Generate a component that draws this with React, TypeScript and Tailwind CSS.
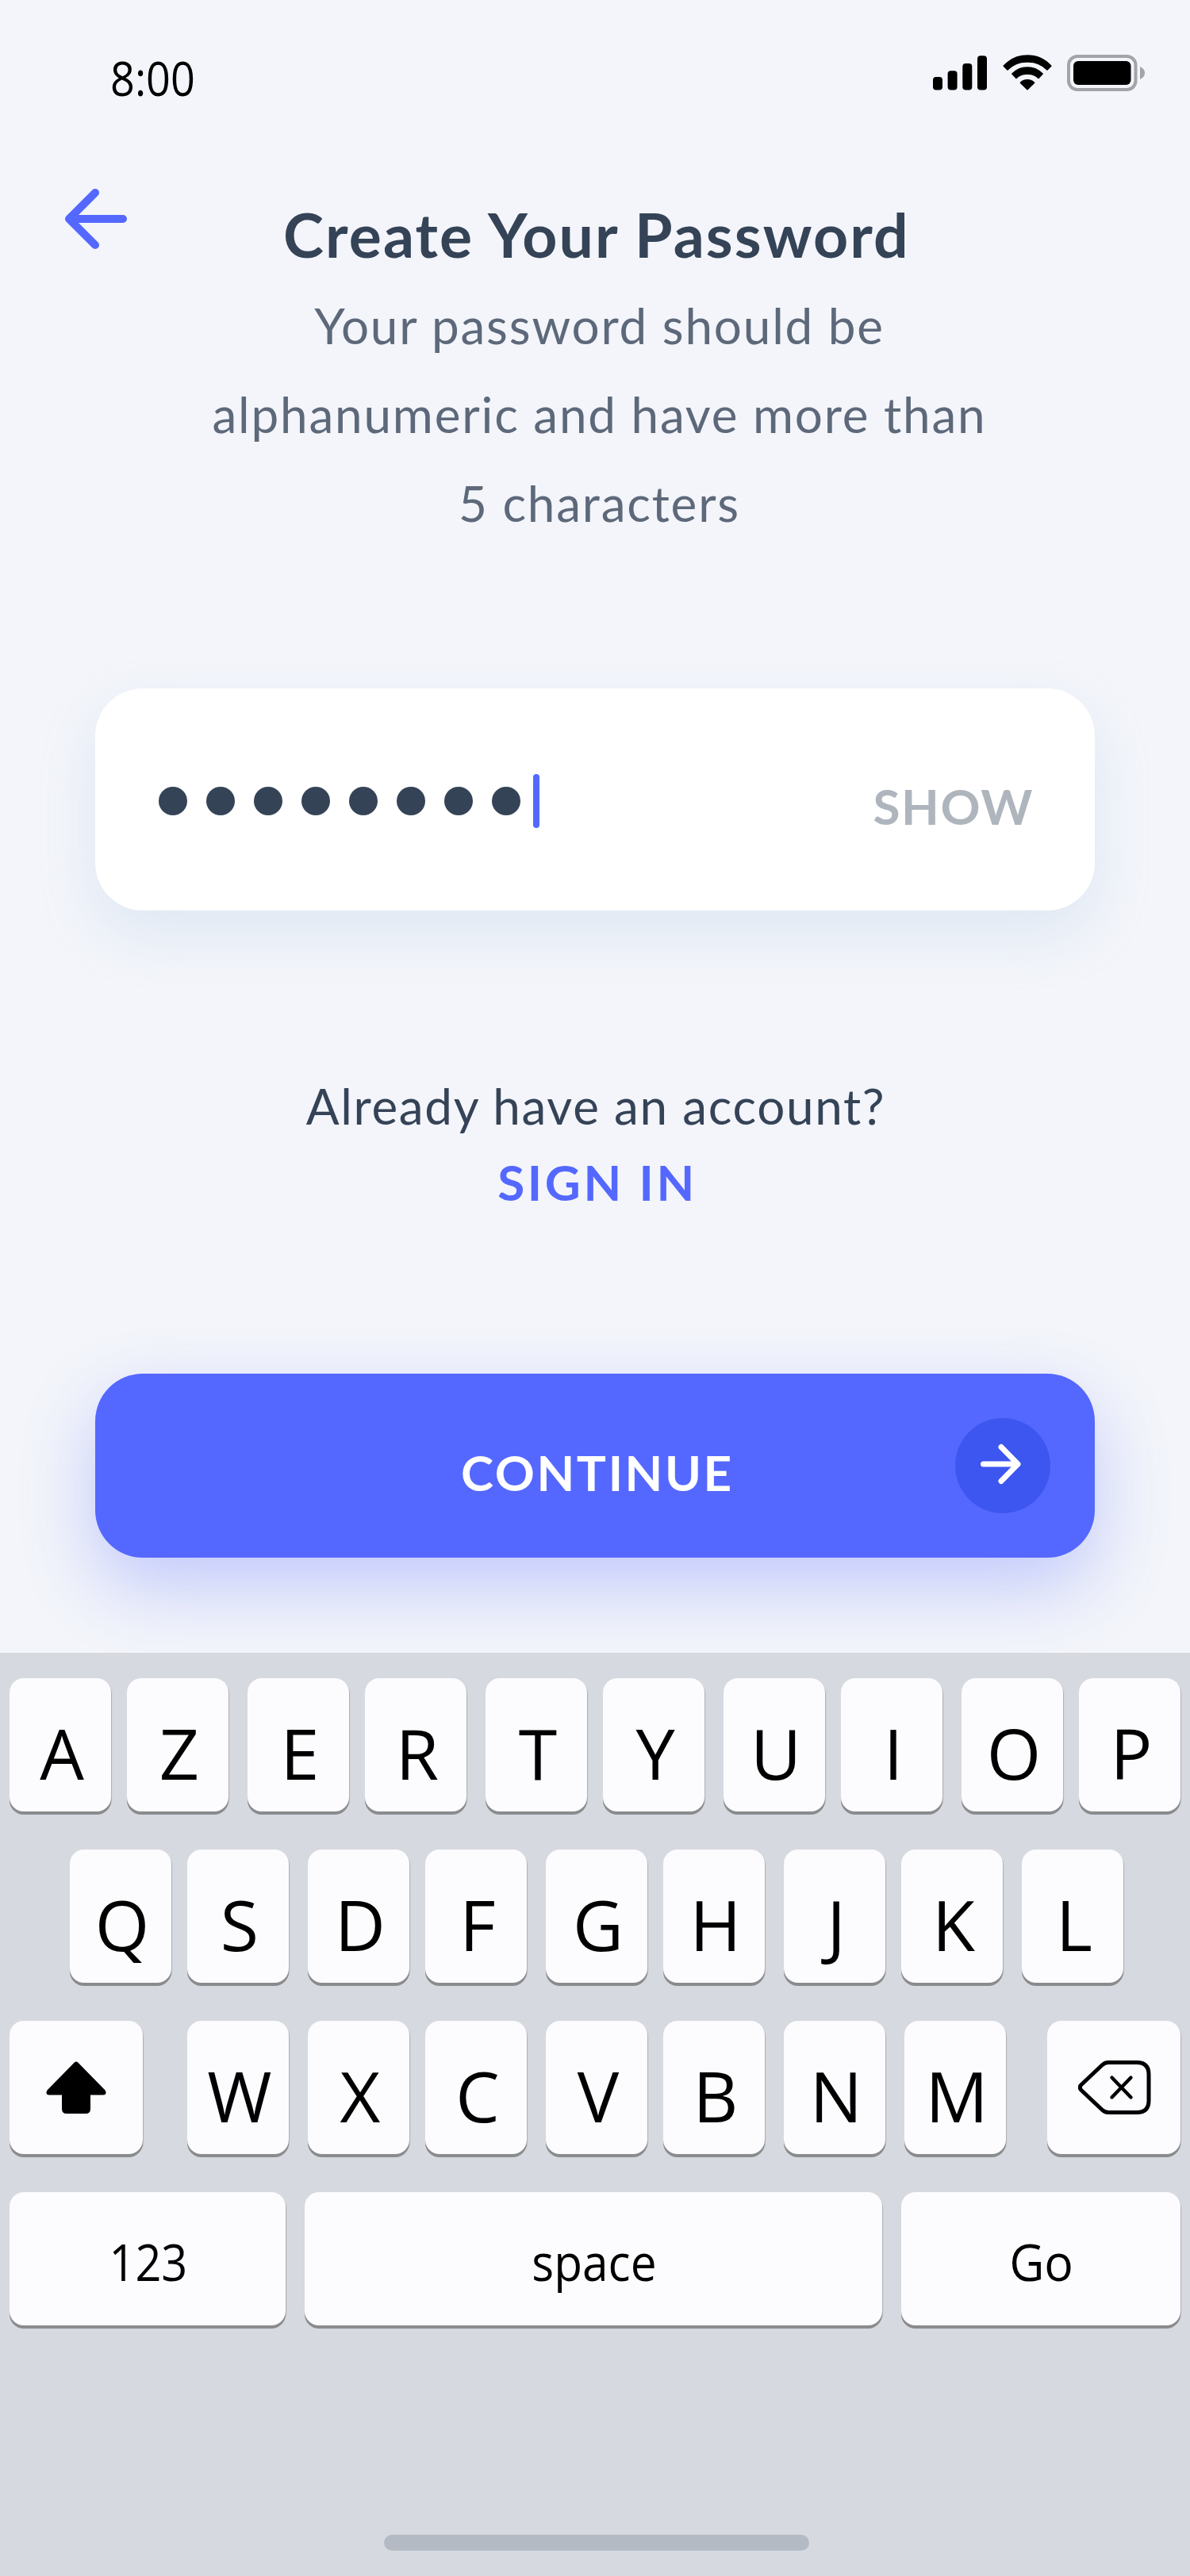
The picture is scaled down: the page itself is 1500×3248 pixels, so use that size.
import type { ReactNode } from "react";

function SignalBars() {
  return (
    <svg className="h-[46px] w-[70px]" viewBox="0 0 70 46" aria-hidden="true">
      <rect x="1" y="28" width="12" height="16.5" rx="4" />
      <rect x="19.6" y="20.2" width="12" height="24.3" rx="4" />
      <rect x="38.3" y="11" width="12" height="33.5" rx="4" />
      <rect x="57" y="1.3" width="12" height="43.2" rx="4" />
    </svg>
  );
}

function WifiIcon() {
  return (
    <svg className="h-[46px] w-[64px]" viewBox="0 0 192 138" aria-hidden="true">
      <g stroke="#000" strokeWidth="5" strokeLinejoin="round">
        <path d="M96 3.500A121 121 0 0 1 185 42.500L171 56.500A101 101 0 0 0 96 26.500A101 101 0 0 0 21 56.500L7 42.500A121 121 0 0 1 96 3.500Z" />
        <path d="M96 48A78 78 0 0 1 153 72.500L138 88A56 56 0 0 0 96 72.500A56 56 0 0 0 54 88L39 72.500A78 78 0 0 1 96 48Z" />
        <path d="M96 95.500A34 34 0 0 1 121.500 106L96 131L70.500 106A34 34 0 0 1 96 95.500Z" />
      </g>
    </svg>
  );
}

function BatteryIcon() {
  return (
    <svg className="h-[46px] w-[98px]" viewBox="0 0 98 46" aria-hidden="true">
      <rect x="2" y="2" width="84.500" height="42" rx="11" fill="none" stroke="#a2a4a7" strokeWidth="4" />
      <rect x="8" y="8" width="72.500" height="30" rx="6" />
      <path d="M92 15C95.500 16.500 98 19.500 98 23S95.500 29.500 92 31Z" fill="#a2a4a7" />
    </svg>
  );
}

function StatusBar() {
  return (
    <div className="flex h-[200px] items-start justify-between pr-[57px] pl-[139px] text-black">
      <span className="mt-[63px] origin-left scale-x-90 font-['Open_Sans',sans-serif] text-[60px] leading-[70px]">8:00</span>
      <div className="mt-[69px] flex items-center">
        <SignalBars />
        <div className="w-[18px]" />
        <WifiIcon />
        <div className="w-[18px]" />
        <BatteryIcon />
      </div>
    </div>
  );
}

function Header() {
  return (
    <header className="grid grid-cols-[160px_1fr_160px] pt-9">
      <button type="button" aria-label="Back" className="h-20 w-20 justify-self-end">
        <svg className="h-20 w-20" viewBox="0 0 80 80" fill="none" stroke="#5468ff" strokeWidth="10" strokeLinecap="round" strokeLinejoin="round">
          <path d="M75 40H7M40 7L7 40L40 73" />
        </svg>
      </button>
      <div className="text-center">
        <h1 className="pt-0.5 pl-1 text-[77px] leading-[115px] font-bold tracking-[2.1px] text-[#354357]">Create Your Password</h1>
        <p className="pt-px pl-[11px] text-[62px] leading-[112px] tracking-[1.8px] text-[#5d697a]">
          Your password should be
          <br />
          alphanumeric and have more than
          <br />5 characters
        </p>
      </div>
    </header>
  );
}

function PasswordField() {
  return (
    <div className="mx-[120px] mt-[178px] flex h-[280px] items-center rounded-[60px] bg-white pr-[77px] pl-20 shadow-[0_30px_72px_rgba(143,180,220,0.2)]">
      <div className="flex items-center pt-1">
        <div className="flex gap-6">
          {Array.from({ length: 8 }, (_, i) => (
            <span key={i} className="h-9 w-9 rounded-full bg-[#354357]" />
          ))}
        </div>
        <span className="ml-4 h-[68px] w-2 rounded-full bg-[#5468ff]" />
      </div>
      <button type="button" className="ml-auto pt-4 text-[62px] leading-none font-bold tracking-[1.6px] text-[#aeb5bd]">
        SHOW
      </button>
    </div>
  );
}

function Key({ width, icon = false, small = false, children }: { width: string; icon?: boolean; small?: boolean; children: ReactNode }) {
  const text = icon ? "" : small ? "pt-2 pl-0.5 text-[64px]" : "pt-5 pl-1 text-[88px]";
  return (
    <button
      type="button"
      className={`flex h-[168px] shrink-0 items-center justify-center rounded-[18px] bg-[#fcfcfe] leading-none shadow-[0_4px_0_#8a8b8d,1px_2px_1px_rgba(0,0,0,0.2)] ${width} ${text}`}
    >
      {children}
    </button>
  );
}

function LetterPairs({ letters }: { letters: string }) {
  const pairs = letters.match(/.{1,2}/g) ?? [];
  return (
    <div className="flex gap-6">
      {pairs.map((pair) => (
        <div key={pair} className="flex gap-5">
          {pair.split("").map((l) => (
            <Key key={l} width="w-32">{l}</Key>
          ))}
        </div>
      ))}
    </div>
  );
}

function Keyboard() {
  return (
    <div className="flex flex-1 flex-col bg-[#d6d9e0] pt-8 font-['Open_Sans',sans-serif] text-black">
      <div className="flex flex-col gap-12">
        <div className="pl-3">
          <LetterPairs letters="AZERTYUIOP" />
        </div>
        <div className="pl-[88px]">
          <LetterPairs letters="QSDFGHJKL" />
        </div>
        <div className="flex px-3">
          <Key width="w-[168px]" icon>
            <svg className="h-[66px] w-[76px]" viewBox="0 0 76 66" aria-hidden="true">
              <path d="M35.500 1.800Q38 -1 40.500 1.800L74.500 36.500Q77.500 42 72 42.500H56V60Q56 66 50 66H26Q20 66 20 60V42.500H4Q-1.500 42 1.500 36.500Z" />
            </svg>
          </Key>
          <div className="ml-14 flex gap-6">
            <Key width="w-32">W</Key>
            <div className="flex gap-5">
              <Key width="w-32">X</Key>
              <Key width="w-32">C</Key>
            </div>
            <div className="flex gap-5">
              <Key width="w-32">V</Key>
              <Key width="w-32">B</Key>
            </div>
            <Key width="w-32">N</Key>
            <Key width="w-32">M</Key>
          </div>
          <div className="ml-auto">
            <Key width="w-[168px]" icon>
              <svg className="ml-0.5 h-[68px] w-[92px]" viewBox="0 0 92 68" fill="none" stroke="#000" strokeWidth="5" strokeLinecap="round" strokeLinejoin="round">
                <path d="M38 2.500H74Q89 2.500 89 17.500V50.500Q89 65.500 74 65.500H38Q33.500 65.500 30 62L4 37.500Q0.500 34 4 30.500L30 6Q33.500 2.500 38 2.500Z" />
                <path d="M42.500 21.500L66.500 46.500M66.500 21.500L42.500 46.500" strokeWidth="4.400" />
              </svg>
            </Key>
          </div>
        </div>
        <div className="flex gap-6 px-3">
          <Key width="w-[348px]" small>
            <span className="scale-x-90">123</span>
          </Key>
          <Key width="w-[728px]" small>
            <span className="scale-x-[0.915]">space</span>
          </Key>
          <Key width="w-[352px]" small>
            <span className="scale-x-95">Go</span>
          </Key>
        </div>
      </div>
      <div className="mt-auto mb-8 ml-[484px] h-5 w-[536px] rounded-full bg-[#b3bac4]" />
    </div>
  );
}

export default function App() {
  return (
    <div className="flex h-[3248px] w-[1500px] flex-col overflow-hidden bg-[#f3f5fa] font-[Lato,sans-serif]">
      <div className="flex h-[2084px] shrink-0 flex-col overflow-hidden">
        <StatusBar />
        <Header />
        <PasswordField />
        <div className="mt-[198px] flex flex-col items-center text-[62px] leading-[96px]">
          <p className="pl-0.5 tracking-[1.65px] text-[#354357]">Already have an account?</p>
          <a href="#sign-in" className="pl-1.5 font-bold tracking-[3.6px] text-[#5468ff]">SIGN IN</a>
        </div>
        <button
          type="button"
          className="mx-[120px] mt-[194px] grid h-[232px] grid-cols-[120px_1fr_120px] items-center rounded-[60px] bg-[#5468ff] px-14 shadow-[0_36px_92px_rgba(84,104,255,0.31)]"
        >
          <span />
          <span className="pt-4 pl-1.5 text-[62px] leading-none font-bold tracking-[2.6px] text-white">CONTINUE</span>
          <span className="h-[120px] w-[120px] rounded-full bg-[#3d56f0]">
            <svg className="h-[120px] w-[120px]" viewBox="0 0 120 120" fill="none" stroke="#fff" strokeWidth="7" strokeLinecap="round" strokeLinejoin="round">
              <path d="M35.500 58H79M58 36.500L79 58L58 79.500" />
            </svg>
          </span>
        </button>
      </div>
      <Keyboard />
    </div>
  );
}
